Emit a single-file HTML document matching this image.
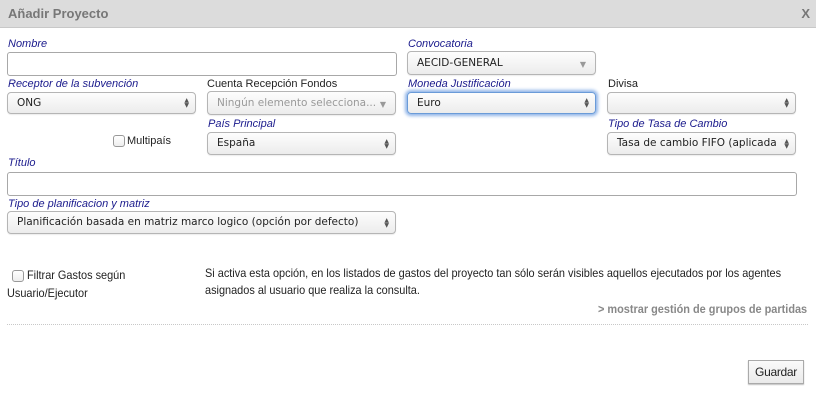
<!DOCTYPE html>
<html><head><meta charset="utf-8"><style>
*{box-sizing:border-box;margin:0;padding:0}
body{width:816px;height:416px;background:#fff;position:relative;overflow:hidden;font-family:"Liberation Sans",sans-serif}
.hd{position:absolute;left:0;top:0;width:816px;height:28px;background:#dcdcdc;border-bottom:1px solid #c8c8c8}
.hd .t{position:absolute;left:8px;top:6px;font-size:13px;font-weight:bold;color:#777}
.hd .x{position:absolute;right:6px;top:6px;font-size:13px;font-weight:bold;color:#777}
.l{position:absolute;font-size:11px;font-style:italic;color:#1a1a8c;white-space:nowrap}
.n{position:absolute;font-size:11px;color:#222;white-space:nowrap}
.in{position:absolute;border:1px solid #a8a8a8;border-radius:3px;background:#fff}
.s{position:absolute;border:1px solid #b5b5b5;border-radius:4px;background:linear-gradient(#fdfdfd,#ececec);font-family:"DejaVu Sans",sans-serif;font-size:10.5px;color:#222;padding-left:9px;white-space:nowrap;overflow:hidden;box-shadow:0 1px 1px rgba(0,0,0,.08)}
.s .a{position:absolute;right:6px;top:50%;transform:translateY(-50%);font-size:6px;line-height:5px;color:#555;text-align:center}
.s .d{position:absolute;right:9px;top:50%;transform:translateY(-40%);font-size:8px;color:#999}
.cb{position:absolute;width:12px;height:12px;border:1px solid #999;border-radius:3px;background:linear-gradient(#fff,#eee)}
.nar{font-family:"Liberation Sans",sans-serif;font-size:12px;color:#222;position:absolute;white-space:nowrap;transform:scaleX(0.91);transform-origin:left top}
</style></head><body>
<div class="hd"><div class="t">Añadir Proyecto</div><div class="x">X</div></div>

<div class="l" style="left:8px;top:38px">Nombre</div>
<div class="in" style="left:7px;top:52px;width:390px;height:24px"></div>
<div class="l" style="left:408px;top:38px">Convocatoria</div>
<div class="s" style="left:407px;top:51px;width:189px;height:24px;line-height:22px">AECID-GENERAL<span class="d">▼</span></div>

<div class="l" style="left:8px;top:78px">Receptor de la subvención</div>
<div class="s" style="left:7px;top:92px;width:189px;height:22px;line-height:20px">ONG<span class="a">▲<br>▼</span></div>
<div class="n" style="left:207px;top:78px">Cuenta Recepción Fondos</div>
<div class="s" style="left:207px;top:91px;width:189px;height:24px;line-height:22px;color:#999">Ningún elemento selecciona...<span class="d">▼</span></div>
<div class="l" style="left:408px;top:78px">Moneda Justificación</div>
<div class="s" style="left:407px;top:92px;width:189px;height:22px;line-height:20px;border-color:#6a9bd8;box-shadow:0 0 3px 2px #8fb4e8">Euro<span class="a">▲<br>▼</span></div>
<div class="n" style="left:608px;top:78px">Divisa</div>
<div class="s" style="left:607px;top:92px;width:189px;height:22px;line-height:20px"><span class="a">▲<br>▼</span></div>

<div class="cb" style="left:113px;top:135px"></div>
<div class="n" style="left:127px;top:135px">Multipaís</div>
<div class="l" style="left:208px;top:118px">País Principal</div>
<div class="s" style="left:207px;top:132px;width:189px;height:23px;line-height:21px">España<span class="a">▲<br>▼</span></div>
<div class="l" style="left:608px;top:118px">Tipo de Tasa de Cambio</div>
<div class="s" style="left:607px;top:132px;width:189px;height:23px;line-height:21px">Tasa de cambio FIFO (aplicada<span class="a" style="background:#f3f3f3;padding-left:3px">▲<br>▼</span></div>

<div class="l" style="left:8px;top:157px">Título</div>
<div class="in" style="left:7px;top:172px;width:790px;height:24px"></div>
<div class="l" style="left:8px;top:198px">Tipo de planificacion y matriz</div>
<div class="s" style="left:7px;top:211px;width:389px;height:23px;line-height:21px">Planificación basada en matriz marco logico (opción por defecto)<span class="a">▲<br>▼</span></div>

<div class="cb" style="left:12px;top:270px"></div>
<div class="nar" style="left:27px;top:268px">Filtrar Gastos según</div>
<div class="nar" style="left:7px;top:286px">Usuario/Ejecutor</div>
<div class="nar" style="left:205px;top:266px">Si activa esta opción, en los listados de gastos del proyecto tan sólo serán visibles aquellos ejecutados por los agentes</div>
<div class="nar" style="left:205px;top:283px">asignados al usuario que realiza la consulta.</div>
<div class="nar" style="left:598px;top:304px;font-weight:bold;color:#888;font-size:11.5px;transform:scaleX(0.95)">&gt; mostrar gestión de grupos de partidas</div>
<div style="position:absolute;left:7px;top:324px;width:801px;border-top:1px dotted #c8c8c8"></div>

<div style="position:absolute;left:748px;top:360px;width:56px;height:24px;border:1px solid #aaa;background:linear-gradient(#fafafa,#eaeaea);box-shadow:0 1px 1px rgba(0,0,0,.25);font-family:'Liberation Sans',sans-serif;font-size:12px;color:#222;text-align:center;line-height:22px;letter-spacing:-0.3px">Guardar</div>
</body></html>
